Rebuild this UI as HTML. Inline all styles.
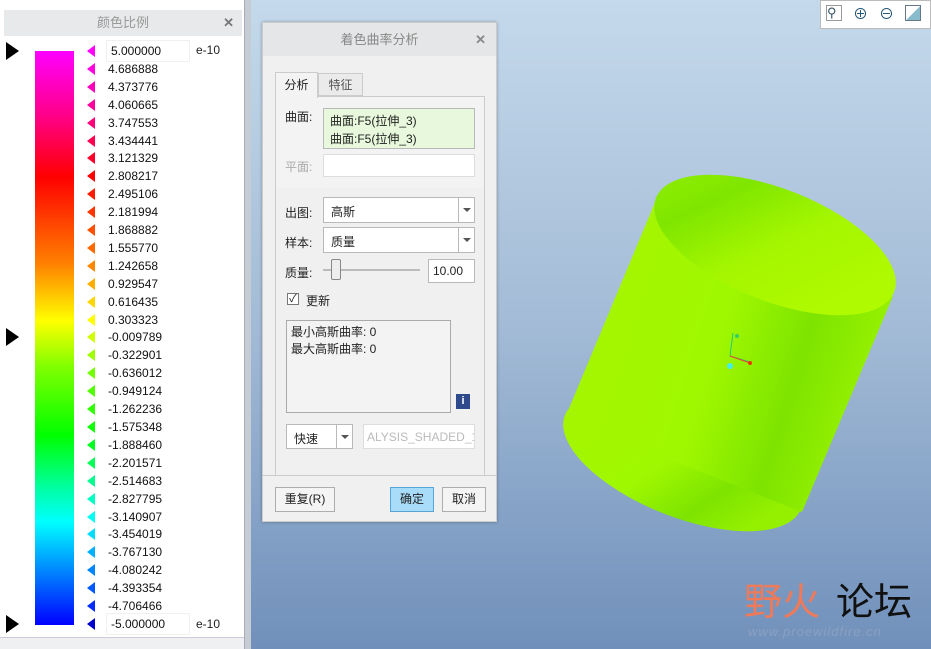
<!DOCTYPE html>
<html><head><meta charset="utf-8"><style>
*{margin:0;padding:0;box-sizing:border-box}
body{width:931px;height:649px;overflow:hidden;position:relative;font-family:"Liberation Sans","Noto Sans CJK SC",sans-serif;font-size:12px;color:#222;background:linear-gradient(#c4d9eb,#a3bbd6 50%,#7090bb)}
.abs{position:absolute}
#lp{left:0;top:0;width:244px;height:649px;background:#fff}
#tabs{left:0;top:0;width:250px;height:10px;background:#d8dde3}
#lt{left:4px;top:10px;width:238px;height:26px;background:#e8e9ea;text-align:center;line-height:26px;color:#999;font-size:13px}
#sep{left:244px;top:0;width:7px;height:649px;background:#c6ccd3;border-left:1px solid #aab}
.row{position:absolute;left:108px;font-size:12px;color:#111;line-height:14px}
.tri{position:absolute;left:87px;width:0;height:0;border-top:6px solid transparent;border-bottom:6px solid transparent;border-right:8px solid}
.bt{position:absolute;left:6px;width:0;height:0;border-top:9px solid transparent;border-bottom:9px solid transparent;border-left:13px solid #000}
#dlg{left:262px;top:22px;width:235px;height:500px;background:#f0f0f0;border:1px solid #ccc;box-shadow:0 0 3px rgba(0,0,0,.3)}
#dt{left:0;top:0;width:233px;height:33px;background:#e5e6e7;text-align:center;line-height:33px;color:#888;font-size:13px}
.box{position:absolute;background:#fff;border:1px solid #b9b9b9}
.lbl{position:absolute;font-size:12px}
.dd{position:absolute;width:16px;right:0;top:0;bottom:0;border-left:1px solid #b9b9b9}
.dd:after{content:"";position:absolute;left:4px;top:10px;border-left:4px solid transparent;border-right:4px solid transparent;border-top:4px solid #555}
.btn{position:absolute;border:1px solid #adadad;background:#f4f4f4;text-align:center;line-height:22px;font-size:12px}
</style></head><body>
<div class="abs" id="tabs"></div>
<div class="abs" id="lp"></div>
<div class="abs" id="lt">颜色比例<span style="position:absolute;right:8px;color:#777;font-weight:bold">✕</span></div>
<div class="abs" style="left:35px;top:51px;width:39px;height:574px;background:linear-gradient(#ff00ff,#ff0080 12%,#ff0000 22%,#ff8000 37%,#ffff00 47%,#80ff00 55%,#00ff00 67%,#00ffa0 76%,#00ffff 82%,#0080ff 91%,#0000ff)"></div>
<div class="abs" style="left:107px;top:41px;width:82px;height:20px;background:#fff;box-shadow:0 0 0 1px #f0f0f0"></div>
<div class="abs" style="left:107px;top:614px;width:82px;height:20px;background:#fff;box-shadow:0 0 0 1px #f0f0f0"></div>
<div class="abs" style="left:196px;top:43px">e-10</div>
<div class="abs" style="left:196px;top:617px">e-10</div>
<div class="bt" style="top:42px"></div><div class="bt" style="top:328px"></div><div class="bt" style="top:615px"></div>
<div id="rows"></div>
<div class="abs" style="left:0;top:637px;width:244px;height:12px;background:#eef0f2;border-top:1px solid #ccd"></div>
<div class="abs" id="sep"></div>
<div class="abs" style="left:820px;top:0;width:111px;height:29px;background:#fff;border:1px solid #bbb"></div>
<div class="abs" style="left:826px;top:5px;width:16px;height:16px;border:1px solid #999;color:#356;font-size:13px;line-height:14px">⚲</div>
<div class="abs" style="left:853px;top:3px;color:#257;font-size:15px">⊕</div>
<div class="abs" style="left:879px;top:3px;color:#257;font-size:15px">⊖</div>
<div class="abs" style="left:905px;top:5px;width:16px;height:16px;background:linear-gradient(135deg,#fff 50%,#8bc 50%);border:1px solid #678"></div>
<svg class="abs" style="left:0;top:0" width="931" height="649">
<defs><linearGradient id="g1" x1="0" y1="0" x2="1" y2="0.3"><stop offset="0" stop-color="#a6f400"/><stop offset=".55" stop-color="#a0f800"/><stop offset=".8" stop-color="#7de400"/><stop offset="1" stop-color="#95f000"/></linearGradient>
<linearGradient id="g2" x1="0" y1="0" x2="1" y2="0.4"><stop offset="0" stop-color="#94f000"/><stop offset=".3" stop-color="#7fe600"/><stop offset=".6" stop-color="#a4f600"/><stop offset="1" stop-color="#b0fa00"/></linearGradient></defs>
<ellipse cx="683" cy="462" rx="127" ry="55" transform="rotate(21.6 683 462)" fill="url(#g1)"/>
<polygon points="656,200 565,418 802,512 893,296" fill="url(#g1)"/>
<ellipse cx="775" cy="245" rx="128" ry="56" transform="rotate(21.6 775 245)" fill="url(#g2)"/>
<path d="M733 333 L730 356 L750 362" stroke="#2c7" fill="none"/><path d="M730 356 L750 363" stroke="#e43" fill="none"/>
<circle cx="730" cy="366" r="3" fill="#4ee"/><circle cx="750" cy="363" r="2" fill="#e30"/><circle cx="737" cy="336" r="2" fill="#3c6"/>
<text x="744" y="615" font-family="Noto Sans CJK SC,sans-serif" font-size="38" fill="#ef7a5a">野火</text>
<text x="836" y="615" font-family="Noto Sans CJK SC,sans-serif" font-size="38" fill="#111">论坛</text>
<text x="748" y="636" font-family="Liberation Sans,sans-serif" font-size="13" font-style="italic" fill="#8aa0c0" letter-spacing="1">www.proewildfire.cn</text>
</svg>
<div class="abs" id="dlg">
<div class="abs" id="dt">着色曲率分析<span style="position:absolute;right:10px;color:#888;font-weight:bold">✕</span></div>
<div class="abs" style="left:12px;top:73px;width:210px;height:380px;border:1px solid #ccc;background:#f0f0f0"></div>
<div class="abs" style="left:12px;top:73px;width:210px;height:92px;border:1px solid #ccc;border-bottom:none;background:#f3f3f3"></div>
<div class="abs" style="left:12px;top:49px;width:43px;height:26px;border:1px solid #ccc;border-bottom:none;background:#f3f3f3;text-align:center;line-height:24px">分析</div>
<div class="abs" style="left:55px;top:50px;width:45px;height:23px;border:1px solid #ccc;background:#ebebeb;text-align:center;line-height:22px;color:#555">特征</div>
<div class="lbl" style="left:22px;top:85px">曲面:</div>
<div class="box" style="left:60px;top:85px;width:152px;height:41px;background:#e8f8dc;padding:3px 6px;line-height:18px">曲面:F5(拉伸_3)<br>曲面:F5(拉伸_3)</div>
<div class="lbl" style="left:22px;top:135px;color:#aaa">平面:</div>
<div class="box" style="left:60px;top:131px;width:152px;height:23px;border-color:#ddd"></div>
<div class="lbl" style="left:22px;top:181px">出图:</div>
<div class="box" style="left:60px;top:174px;width:152px;height:26px;padding:5px 7px">高斯<div class="dd"></div></div>
<div class="lbl" style="left:22px;top:211px">样本:</div>
<div class="box" style="left:60px;top:204px;width:152px;height:26px;padding:5px 7px">质量<div class="dd"></div></div>
<div class="lbl" style="left:22px;top:241px">质量:</div>
<div class="abs" style="left:60px;top:246px;width:97px;height:2px;background:#bbb"></div>
<div class="abs" style="left:68px;top:236px;width:10px;height:21px;border:1px solid #888;background:#eee;border-radius:2px"></div>
<div class="box" style="left:165px;top:236px;width:47px;height:24px;padding:4px 4px">10.00</div>
<div class="abs" style="left:24px;top:270px;width:12px;height:12px;border:1px solid #777;background:#fff;font-size:11px;line-height:10px;text-align:center">✓</div>
<div class="lbl" style="left:43px;top:269px">更新</div>
<div class="box" style="left:23px;top:297px;width:165px;height:93px;background:#f3f3f3;border-color:#aaa;padding:3px 4px;line-height:17px">最小高斯曲率: 0<br>最大高斯曲率: 0</div>
<div class="abs" style="left:193px;top:371px;width:14px;height:15px;background:#2e4a8c;color:#fff;font-size:11px;font-weight:bold;text-align:center;line-height:15px">i</div>
<div class="box" style="left:23px;top:401px;width:67px;height:25px;padding:5px 7px">快速<div class="dd"></div></div>
<div class="box" style="left:100px;top:401px;width:112px;height:25px;color:#bbb;padding:5px 3px;border-color:#ddd;overflow:hidden;white-space:nowrap">ALYSIS_SHADED_1</div>
<div class="abs" style="left:0;top:452px;width:233px;height:1px;background:#ccc"></div>
<div class="btn" style="left:12px;top:464px;width:60px;height:25px">重复(R)</div>
<div class="btn" style="left:127px;top:464px;width:44px;height:25px;background:#a8dcf8;border-color:#55a5d8">确定</div>
<div class="btn" style="left:179px;top:464px;width:44px;height:25px">取消</div>
</div>
<script>
var h="";for(var i=0;i<33;i++){var v=5-i*0.3131118;var c=i/32;var col;
var stops=[[0,[255,0,255]],[.12,[255,0,128]],[.22,[255,0,0]],[.37,[255,128,0]],[.47,[255,255,0]],[.55,[128,255,0]],[.67,[0,255,0]],[.76,[0,255,160]],[.82,[0,255,255]],[.91,[0,128,255]],[1,[0,0,255]]];
for(var k=0;k<stops.length-1;k++){if(c<=stops[k+1][0]){var t=(c-stops[k][0])/(stops[k+1][0]-stops[k][0]);var a=stops[k][1],b=stops[k+1][1];col="rgb("+Math.round(a[0]+(b[0]-a[0])*t)+","+Math.round(a[1]+(b[1]-a[1])*t)+","+Math.round(a[2]+(b[2]-a[2])*t)+")";break;}}
if(i==32)col="#0000cc";
var y=51+i*17.906;var s=(i==32?"-5.000000":(i==0?"5.000000":v.toFixed(6)));
h+='<div class="tri" style="top:'+(y-6)+'px;border-right-color:'+col+'"></div><div class="row" style="top:'+(y-7)+'px;'+(i==0||i==32?'left:111px':'')+'">'+s+'</div>';}
document.getElementById("rows").innerHTML=h;
</script>
</body></html>
